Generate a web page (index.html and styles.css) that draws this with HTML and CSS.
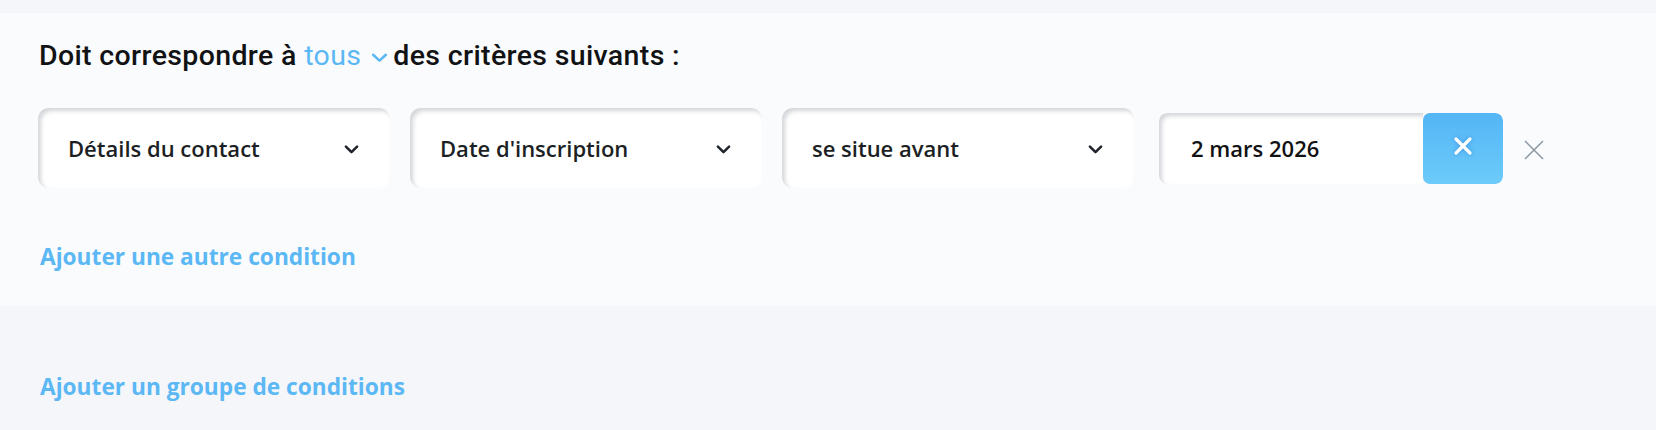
FILE: index.html
```html
<!DOCTYPE html>
<html lang="fr">
<head>
<meta charset="utf-8">
<title>Conditions</title>
<link rel="stylesheet" href="styles.css">
</head>
<body>
<div class="top-strip"></div>
<section class="panel">
  <h2 class="match">Doit correspondre à <span class="match-sel">tous<svg class="match-chev" viewBox="0 0 16 9" width="17" height="10"><path d="M2 1.5 L8 7 L14 1.5" fill="none" stroke="#5bb8f5" stroke-width="2.4" stroke-linecap="round" stroke-linejoin="round"/></svg></span>des critères suivants :</h2>
  <div class="row">
    <div class="select"><span>Détails du contact</span><svg class="chev" viewBox="0 0 16 10" width="15" height="9"><path d="M1.8 1.8 L8 8 L14.2 1.8" fill="none" stroke="#1f242c" stroke-width="2.8" stroke-linecap="round" stroke-linejoin="round"/></svg></div>
    <div class="select"><span>Date d'inscription</span><svg class="chev" viewBox="0 0 16 10" width="15" height="9"><path d="M1.8 1.8 L8 8 L14.2 1.8" fill="none" stroke="#1f242c" stroke-width="2.8" stroke-linecap="round" stroke-linejoin="round"/></svg></div>
    <div class="select"><span>se situe avant</span><svg class="chev" viewBox="0 0 16 10" width="15" height="9"><path d="M1.8 1.8 L8 8 L14.2 1.8" fill="none" stroke="#1f242c" stroke-width="2.8" stroke-linecap="round" stroke-linejoin="round"/></svg></div>
    <div class="date">
      <div class="date-value">2 mars 2026</div>
      <button class="date-clear" type="button"><svg viewBox="0 0 20 20" width="20" height="20"><path d="M3 3 L17 17 M17 3 L3 17" fill="none" stroke="#ffffff" stroke-width="3.2" stroke-linecap="round"/></svg></button>
    </div>
    <button class="remove" type="button"><svg viewBox="0 0 20 20" width="20" height="20"><path d="M1 1 L19 19 M19 1 L1 19" fill="none" stroke="#8a97a3" stroke-width="1.5"/></svg></button>
  </div>
  <a class="link add-cond" href="#">Ajouter une autre condition</a>
</section>
<section class="footer">
  <a class="link" href="#">Ajouter un groupe de conditions</a>
</section>
</body>
</html>
```
FILE: styles.css
```css
html, body {
  margin: 0;
  padding: 0;
}
body {
  background: #f5f6f9;
  font-family: "Open Sans", "Noto Sans", sans-serif;
  color: #1c1f24;
}
.top-strip {
  height: 13px;
}
.panel {
  background: #fafbfc;
  height: 293px;
  box-sizing: border-box;
  padding-top: 26px;
}
.match {
  margin: 0 0 0 39px;
  font-family: Roboto, "Liberation Sans", sans-serif;
  font-weight: 500;
  font-size: 28.5px;
  line-height: 34px;
  color: #111214;
  letter-spacing: 0.35px;
}
.match-sel {
  color: #5bb8f5;
  font-weight: 400;
  display: inline-flex;
  align-items: center;
  margin-right: 5px;
}
.match-chev {
  margin-left: 10px;
  margin-top: 3px;
}
.row {
  display: flex;
  align-items: center;
  margin: 35px 0 0 38px;
}
.select {
  width: 352px;
  height: 80px;
  box-sizing: border-box;
  background: #ffffff;
  border-radius: 11px;
  box-shadow: inset 3px 3px 4px rgba(40, 50, 70, 0.20);
  display: flex;
  align-items: center;
  justify-content: space-between;
  padding: 0 31px 0 30px;
  margin-right: 20px;
  font-size: 22px;
  font-weight: 600;
  color: #1c1f24;
}
.select:nth-child(3) {
  margin-right: 25px;
}
.chev {
  margin-top: 2px;
}
.date {
  display: flex;
  height: 71px;
  width: 344px;
  border-radius: 8px;
  overflow: hidden;
}
.date-value {
  flex: 1;
  background: #ffffff;
  box-shadow: inset 3px 3px 4px rgba(40, 50, 70, 0.20);
  border-radius: 8px 0 0 8px;
  display: flex;
  align-items: center;
  padding-left: 32px;
  font-size: 22px;
  font-weight: 600;
  color: #111214;
}
.date-clear {
  width: 80px;
  border: 0;
  padding: 0;
  border-radius: 7px;
  background: linear-gradient(180deg, #54b5f6 0%, #6ccbf9 100%);
  display: flex;
  align-items: center;
  justify-content: center;
  padding-bottom: 4px;
}
.date-clear svg {
  filter: drop-shadow(0 0 2px rgba(40, 120, 220, 0.6));
}
.remove {
  border: 0;
  background: transparent;
  padding: 0;
  margin-left: 21px;
  display: flex;
  margin-top: 4px;
}
.link {
  display: block;
  color: #5bb8f5;
  text-decoration: none;
  font-weight: 700;
  font-size: 22.7px;
  line-height: 28px;
  margin-left: 40px;
  width: max-content;
}
.add-cond {
  margin-top: 55px;
}
.footer {
  padding-top: 67px;
}
```
